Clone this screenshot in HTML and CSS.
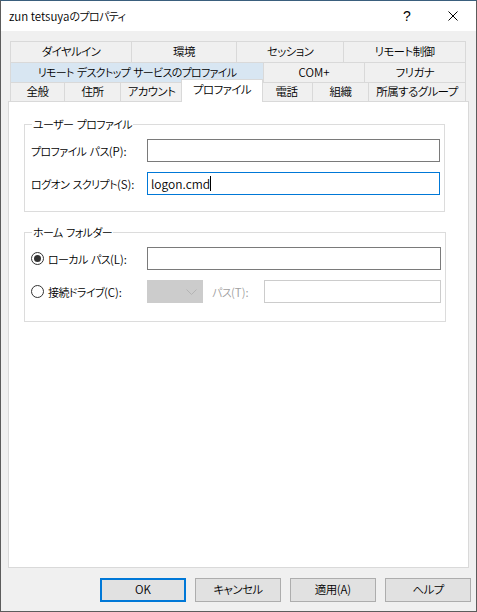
FILE: index.html
```html
<!DOCTYPE html>
<html lang="ja">
<head>
<meta charset="utf-8">
<title>zun tetsuyaのプロパティ</title>
<link rel="stylesheet" href="styles.css">
</head>
<body>
<div class="window">
  <div class="titlebar">
    <span class="title"><span class="latin">zun tetsuya</span>のプロパティ</span>
    <div class="caption">
      <span class="cbtn help">?</span>
      <span class="cbtn close"><svg width="10" height="10" viewBox="0 0 10 10"><path d="M0.5 0.5L9.5 9.5M9.5 0.5L0.5 9.5" stroke="#000" stroke-width="1" fill="none"/></svg></span>
    </div>
  </div>
  <div class="client">
    <div class="tabs">
      <div class="tabrow r1">
        <div class="tab">ダイヤルイン</div>
        <div class="tab">環境</div>
        <div class="tab">セッション</div>
        <div class="tab">リモート制御</div>
      </div>
      <div class="tabrow r2">
        <div class="tab hot">リモート デスクトップ サービスのプロファイル</div>
        <div class="tab"><span class="latin">COM+</span></div>
        <div class="tab">フリガナ</div>
      </div>
      <div class="tabrow r3">
        <div class="tab">全般</div>
        <div class="tab">住所</div>
        <div class="tab">アカウント</div>
        <div class="tab selected">プロファイル</div>
        <div class="tab">電話</div>
        <div class="tab">組織</div>
        <div class="tab">所属するグループ</div>
      </div>
    </div>
    <div class="panel">
      <fieldset class="group g1">
        <legend>ユーザー プロファイル</legend>
        <div class="fields">
          <span class="label">プロファイル パス<span class="mn">(P):</span></span>
          <div class="input"></div>
          <span class="label">ログオン スクリプト<span class="mn">(S):</span></span>
          <div class="input focus"><span class="latin">logon.cmd</span><span class="caret"></span></div>
        </div>
      </fieldset>
      <fieldset class="group g2">
        <legend>ホーム フォルダー</legend>
        <div class="fields">
          <span class="label radio-label"><span class="radio checked"></span>ローカル パス<span class="mn">(L):</span></span>
          <div class="input"></div>
          <span class="label radio-label"><span class="radio"></span>接続ドライブ<span class="mn">(C):</span></span>
          <div class="drive-row">
            <div class="combo disabled"><svg width="11" height="6" viewBox="0 0 11 6"><path d="M0.5 0.5L5.5 5.5L10.5 0.5" stroke="#b4b4b4" stroke-width="1" fill="none"/></svg></div>
            <span class="label dim">パス<span class="mn">(T):</span></span>
            <div class="input disabled"></div>
          </div>
        </div>
      </fieldset>
    </div>
    <div class="buttons">
      <button class="btn default"><span class="latin">OK</span></button>
      <button class="btn">キャンセル</button>
      <button class="btn">適用<span class="mn">(A)</span></button>
      <button class="btn">ヘルプ</button>
    </div>
  </div>
</div>
</body>
</html>
```

FILE: styles.css
```css
* { box-sizing: border-box; }
html, body { margin: 0; padding: 0; }
body {
  font-family: "Noto Sans CJK JP", "Noto Sans", sans-serif;
  font-size: 11px;
  letter-spacing: -0.6px;
  word-spacing: 1.5px;
  font-weight: 350;
  font-feature-settings: "palt";
  color: #000;
  background: #fff;
}
.latin {
  font-size: 11.5px;
  letter-spacing: 0;
  word-spacing: 0;
}
.mn {
  letter-spacing: 0;
  font-size: 11.5px;
}
.window {
  width: 477px;
  height: 612px;
  border: 1px solid #5c5c5c;
  border-top-color: #3a5f7d;
  display: flex;
  flex-direction: column;
  background: #f0f0f0;
}
.titlebar {
  height: 30px;
  background: #fff;
  display: flex;
  align-items: center;
  justify-content: space-between;
  flex: none;
}
.title {
  padding-left: 8px;
  font-size: 11px;
}
.caption { display: flex; height: 30px; }
.cbtn {
  width: 46px;
  height: 30px;
  display: flex;
  align-items: center;
  justify-content: center;
}
.cbtn.help { font-size: 14px; font-family: "Liberation Sans", sans-serif; letter-spacing: 0; }
.client {
  flex: 1;
  padding: 10px 7px 0 7px;
  display: flex;
  flex-direction: column;
}
.tabs {
  margin-left: 2px;
  width: 456px;
  display: flex;
  flex-direction: column;
}
.tabrow { display: grid; }
.r1 { grid-template-columns: 122px 105px 107px 122px; height: 21px; }
.r2 { grid-template-columns: 254px 101px 101px; height: 20px; }
.r3 { grid-template-columns: 55px 56px 62px 78px 52px 56px 97px; height: 19px; }
.tab {
  border: 1px solid #d9d9d9;
  border-bottom: 0;
  margin-left: -1px;
  display: flex;
  align-items: center;
  justify-content: center;
  white-space: nowrap;
  line-height: 1;
  background: #f0f0f0;
  font-size: 11.5px;
}
.tab:first-child { margin-left: 0; }
.tab.hot { background: #d8e6f2; font-size: 11px; letter-spacing: -0.7px; }
.tab.selected {
  position: relative;
  z-index: 1;
  background: #fff;
  margin: -3px -2px -1px -2px;
  padding-bottom: 2px;
}
.panel {
  height: 467px;
  background: #fff;
  border: 1px solid #d9d9d9;
  padding: 14px 23px 0 15px;
  flex: none;
}
.group {
  margin: 0;
  border: 1px solid #dcdcdc;
  padding: 0 4px 0 6px;
  min-width: 0;
}
.group legend {
  margin-left: 1px;
  padding: 0 1px;
  line-height: 16px;
}
.g1 { padding-top: 7px; padding-bottom: 16px; }
.g2 { margin-top: 12px; padding-top: 7px; padding-bottom: 18px; margin-right: -1px; }
.fields {
  display: grid;
  grid-template-columns: 116px 1fr;
  row-gap: 10px;
  align-items: center;
}
.label { white-space: nowrap; }
.input {
  height: 23px;
  border: 1px solid #7a7a7a;
  background: #fff;
  display: flex;
  align-items: center;
  padding-left: 3px;
}
.input.focus { border-color: #0078d7; }
.input .latin { font-size: 12px; }
.caret {
  width: 1px;
  height: 15px;
  background: #000;
}
.input.disabled { border-color: #cccccc; flex: 1; }
.radio-label { display: flex; align-items: center; }
.radio {
  width: 13px;
  height: 13px;
  border: 1px solid #333;
  border-radius: 50%;
  margin-right: 4px;
  display: inline-flex;
  align-items: center;
  justify-content: center;
  background: #fff;
  flex: none;
}
.radio.checked::after {
  content: "";
  width: 7px;
  height: 7px;
  border-radius: 50%;
  background: #333;
}
.drive-row { display: flex; align-items: center; }
.combo {
  width: 56px;
  height: 23px;
  background: #cccccc;
  border: 1px solid #cccccc;
  display: flex;
  align-items: center;
  justify-content: flex-end;
  padding-right: 5px;
}
.dim { color: #a0a0a0; margin-left: 9px; width: 52px; }
.buttons {
  display: flex;
  justify-content: flex-end;
  gap: 9px;
  margin-top: 10px;
  margin-right: -2px;
}
.btn {
  width: 86px;
  height: 24px;
  background: #e1e1e1;
  border: 1px solid #adadad;
  font-family: inherit;
  font-size: 11.5px;
  font-weight: inherit;
  letter-spacing: -0.6px;
  font-feature-settings: "palt";
  color: #000;
  padding: 0;
  line-height: 1;
}
.btn.default { border: 2px solid #0078d7; }
```
